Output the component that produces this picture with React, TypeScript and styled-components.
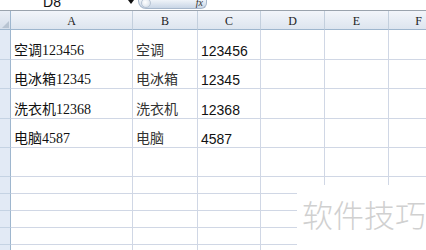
import React from "react";
import styled, { createGlobalStyle } from "styled-components";

const Global = createGlobalStyle`
  html, body { margin: 0; padding: 0; background: #fff; }
  #root { width: 426px; height: 250px; overflow: hidden; }
`;

const Page = styled.div`
  position: relative;
  width: 426px;
  height: 250px;
  overflow: hidden;
  background: #fff;
  font-family: "Noto Sans CJK SC", sans-serif;
`;

const TopBar = styled.div`
  display: flex;
  align-items: flex-end;
  height: 11px;
  border-bottom: 1px solid #9aa3ad;
  box-sizing: border-box;
  overflow: hidden;
`;

const NameBox = styled.div`
  width: 124px;
  height: 11px;
  display: flex;
  justify-content: center;
  align-items: flex-end;
  font-family: "Liberation Sans", sans-serif;
  font-size: 14px;
  line-height: 14px;
  color: #111;
  padding-left: 4px;
  box-sizing: border-box;
`;

const NameText = styled.span`
  margin-bottom: 1px;
  margin-left: -24px;
`;

const Arrow = styled.div`
  width: 14px;
  height: 11px;
  display: flex;
  justify-content: center;
  align-items: flex-start;
  padding-top: 1px;
  box-sizing: border-box;
  &::after {
    content: "";
    border-left: 3px solid transparent;
    border-right: 3px solid transparent;
    border-top: 4px solid #111;
  }
`;

const FormulaPill = styled.div`
  width: 69px;
  height: 10px;
  margin-bottom: 1px;
  border-radius: 0 0 6px 8px;
  background: linear-gradient(#f4f7fb, #c9d6e6);
  border: 1px solid #a8b8cc;
  border-top: none;
  box-sizing: border-box;
  display: flex;
  justify-content: space-between;
  align-items: flex-end;
  padding: 0 3px 0 2px;
`;

const Knob = styled.div`
  width: 8px;
  height: 8px;
  border-radius: 50%;
  background: radial-gradient(circle at 40% 40%, #ffffff, #d0dae6);
  border: 1px solid #b7c4d4;
`;

const Fx = styled.span`
  font-family: "Liberation Serif", serif;
  font-style: italic;
  font-size: 10px;
  line-height: 10px;
  color: #333;
`;

const Grid = styled.div`
  display: grid;
  grid-template-columns: 11px 122px 65px 63px 64px 64px 60px;
`;

const Corner = styled.div`
  height: 19px;
  box-sizing: border-box;
  background: linear-gradient(#e9eef6, #d6dfeb);
  border-right: 1px solid #9eb6ce;
  border-bottom: 1px solid #9eb6ce;
  position: relative;
  &::after {
    content: "";
    position: absolute;
    right: 1px;
    bottom: 1px;
    border-left: 7px solid transparent;
    border-bottom: 7px solid #b8c4d2;
  }
`;

const ColHead = styled.div`
  height: 19px;
  box-sizing: border-box;
  background: linear-gradient(#f2f5fa, #dde5ef);
  border-right: 1px solid #c3cfdd;
  border-bottom: 1px solid #9eb6ce;
  display: flex;
  align-items: center;
  justify-content: center;
  font-family: "Liberation Serif", serif;
  font-size: 12px;
  color: #222;
  padding-top: 3px;
`;

const RowHead = styled.div<{ $h: number }>`
  height: ${(p) => p.$h}px;
  box-sizing: border-box;
  background: #e2eaf5;
  border-right: 1px solid #9eb6ce;
  border-bottom: 1px solid #c5d3e3;
`;

const Cell = styled.div<{ $h: number; $kind?: "a" | "b" | "c" }>`
  height: ${(p) => p.$h}px;
  box-sizing: border-box;
  border-right: 1px solid #d0d7e5;
  border-bottom: 1px solid #d0d7e5;
  display: flex;
  align-items: flex-end;
  padding: 0 0 0 3px;
  white-space: nowrap;
  color: ${(p) => (p.$kind === "b" ? "#333" : "#111")};
  font-family: ${(p) =>
    p.$kind === "c"
      ? `"Liberation Sans", "Noto Sans CJK SC", sans-serif`
      : `"Liberation Serif", "Noto Sans CJK SC", serif`};
  font-size: 14px;
  line-height: 12px;
  padding-bottom: 2px;
`;

const Watermark = styled.div`
  position: absolute;
  left: 297px;
  top: 185px;
  right: 0;
  bottom: 0;
  background: #fff;
  display: flex;
  align-items: flex-start;
  padding: 10px 0 0 5px;
  font-family: "Noto Sans CJK SC", sans-serif;
  font-weight: 300;
  font-size: 31px;
  line-height: 38px;
  color: #d0d0d0;
`;

const cols = ["A", "B", "C", "D", "E", "F"];
const heights = [30, 29, 30, 29, 29, 17, 17, 17, 17, 17];
const data: [string, string, string][] = [
  ["空调123456", "空调", "123456"],
  ["电冰箱12345", "电冰箱", "12345"],
  ["洗衣机12368", "洗衣机", "12368"],
  ["电脑4587", "电脑", "4587"],
];

export default function App() {
  return (
    <Page>
      <Global />
      <TopBar>
        <NameBox>
          <NameText>D8</NameText>
        </NameBox>
        <Arrow />
        <FormulaPill>
          <Knob />
          <Fx>fx</Fx>
        </FormulaPill>
      </TopBar>
      <Grid>
        <Corner />
        {cols.map((c) => (
          <ColHead key={c}>{c}</ColHead>
        ))}
        {heights.map((h, r) => {
          const row = data[r];
          return (
            <React.Fragment key={r}>
              <RowHead $h={h} />
              <Cell $h={h} $kind="a">{row ? row[0] : ""}</Cell>
              <Cell $h={h} $kind="b">{row ? row[1] : ""}</Cell>
              <Cell $h={h} $kind="c">{row ? row[2] : ""}</Cell>
              <Cell $h={h} />
              <Cell $h={h} />
              <Cell $h={h} />
            </React.Fragment>
          );
        })}
      </Grid>
      <Watermark>软件技巧</Watermark>
    </Page>
  );
}
